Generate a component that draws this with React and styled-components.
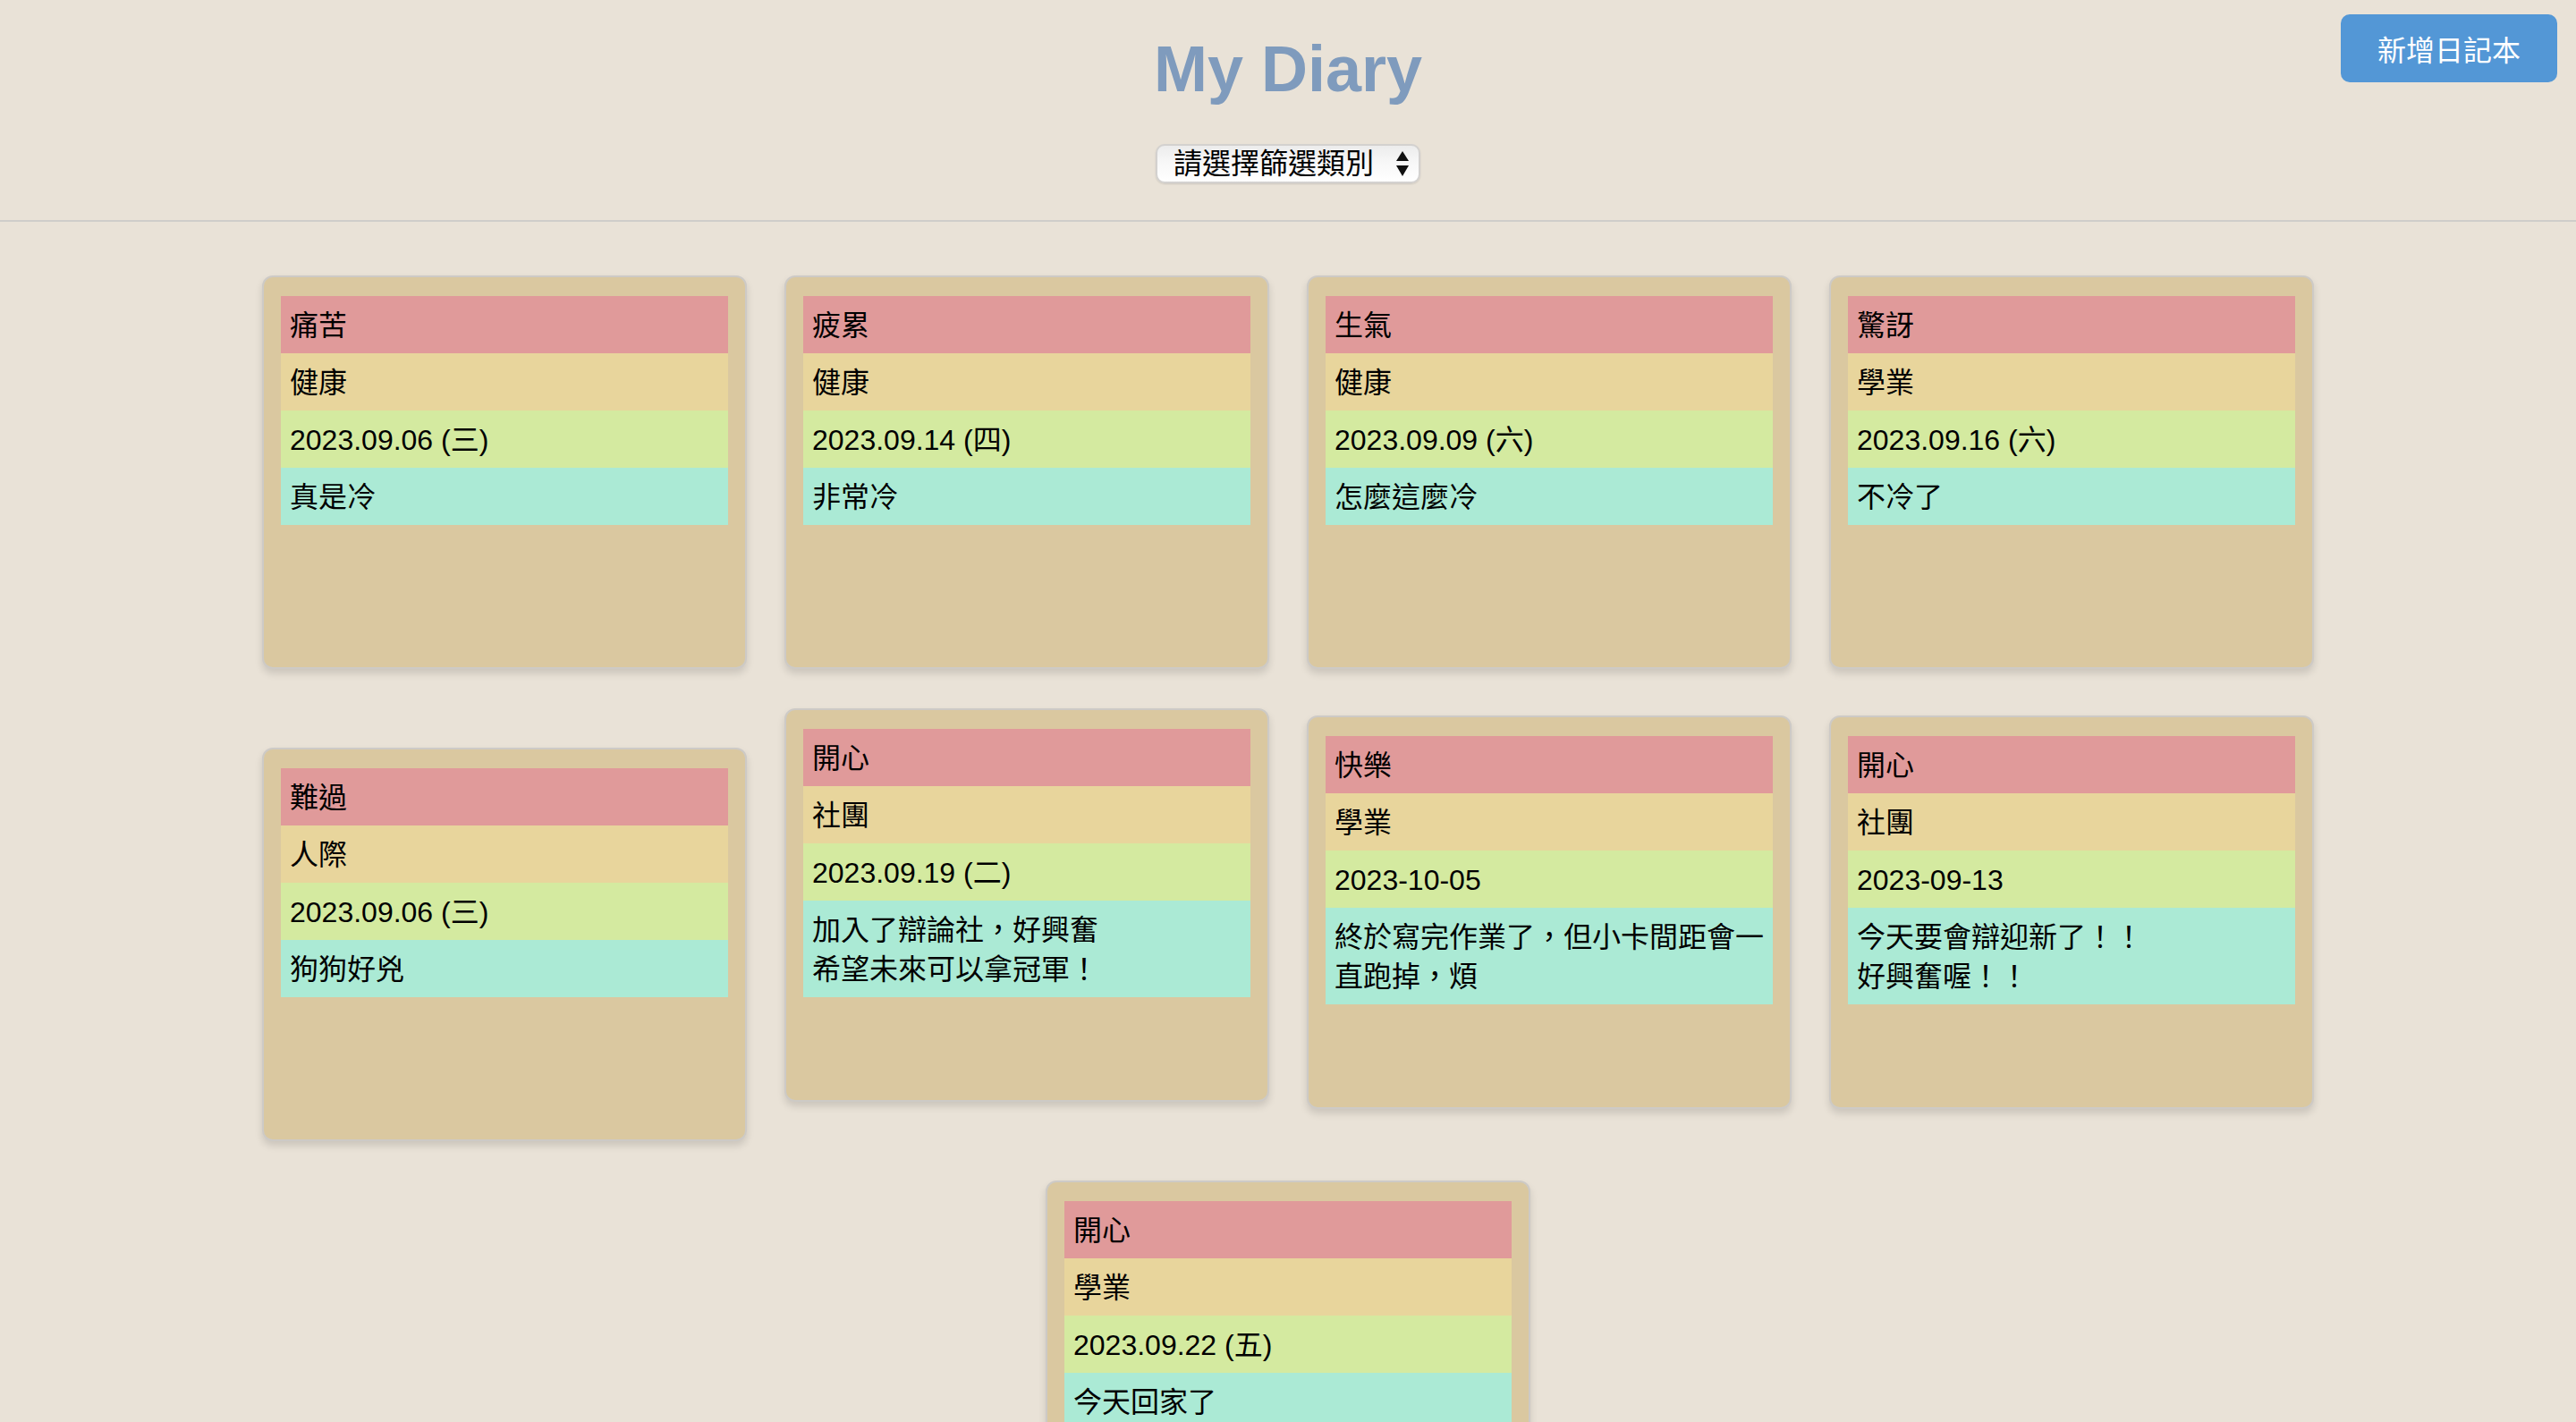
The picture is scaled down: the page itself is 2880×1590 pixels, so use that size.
import React from 'react';
import styled, { createGlobalStyle } from 'styled-components';

const entries = [
  { mood: '痛苦', tag: '健康', date: '2023.09.06 (三)', text: '真是冷' },
  { mood: '疲累', tag: '健康', date: '2023.09.14 (四)', text: '非常冷' },
  { mood: '生氣', tag: '健康', date: '2023.09.09 (六)', text: '怎麼這麼冷' },
  { mood: '驚訝', tag: '學業', date: '2023.09.16 (六)', text: '不冷了' },
  { mood: '難過', tag: '人際', date: '2023.09.06 (三)', text: '狗狗好兇', shift: 44 },
  { mood: '開心', tag: '社團', date: '2023.09.19 (二)', text: '加入了辯論社，好興奮\n希望未來可以拿冠軍！' },
  { mood: '快樂', tag: '學業', date: '2023-10-05', text: '終於寫完作業了，但小卡間距會一直跑掉，煩', shift: 8 },
  { mood: '開心', tag: '社團', date: '2023-09-13', text: '今天要會辯迎新了！！\n好興奮喔！！', shift: 8 },
  { mood: '開心', tag: '學業', date: '2023.09.22 (五)', text: '今天回家了' },
];

const App = () => {
  return (
    <>
      <GlobalStyle />
      <Header>
        <span />
        <TitleBlock>
          <Title>My Diary</Title>
          <SelectWrap>
            <FilterSelect defaultValue="">
              <option value="">請選擇篩選類別</option>
              <option value="健康">健康</option>
              <option value="學業">學業</option>
              <option value="人際">人際</option>
              <option value="社團">社團</option>
            </FilterSelect>
            <SelectArrow width="14" height="28" viewBox="0 0 14 28">
              <path d="M7 0 L14 11 L0 11 Z" fill="#111" />
              <path d="M0 16 L14 16 L7 28 Z" fill="#111" />
            </SelectArrow>
          </SelectWrap>
        </TitleBlock>
        <AddButton>新增日記本</AddButton>
      </Header>
      <CardList>
        {entries.map((e, i) => (
          <Card key={i} shift={e.shift || 0}>
            <Row tone="#e09a9a">{e.mood}</Row>
            <Row tone="#e8d59c">{e.tag}</Row>
            <Row tone="#d4eaa0">{e.date}</Row>
            <Row tone="#abead5">{e.text}</Row>
          </Card>
        ))}
      </CardList>
    </>
  );
};

export default App;

const GlobalStyle = createGlobalStyle`
  html {
    scrollbar-width: none;
  }
  html::-webkit-scrollbar {
    display: none;
  }
  body {
    margin: 0;
    background: #e9e2d7;
    font-family: "Liberation Sans", "Noto Sans CJK TC", sans-serif;
    color: #000;
  }
`;

const Header = styled.header`
  display: grid;
  grid-template-columns: 1fr auto 1fr;
  padding-bottom: 41px;
  border-bottom: 2px solid #cfcdca;
`;

const TitleBlock = styled.div`
  display: flex;
  flex-direction: column;
  align-items: center;
`;

const Title = styled.h1`
  margin: 35px 0 0;
  font-size: 72px;
  line-height: 84px;
  font-weight: 700;
  color: #7f9bbd;
  font-family: "Liberation Sans", sans-serif;
`;

const SelectWrap = styled.div`
  position: relative;
  margin-top: 42px;
  width: 296px;
  height: 44px;
`;

const FilterSelect = styled.select`
  appearance: none;
  -webkit-appearance: none;
  box-sizing: border-box;
  width: 100%;
  height: 100%;
  margin: 0;
  padding: 0 0 0 18px;
  border: 2px solid #d3d1cf;
  border-radius: 10px;
  background: linear-gradient(#ececec, #f7f7f7 45%, #ffffff);
  box-shadow: 0 1px 2px rgba(0, 0, 0, 0.12);
  font-family: "Liberation Sans", "Noto Sans CJK TC", sans-serif;
  font-size: 32px;
  color: #000;
  line-height: 40px;
`;

const SelectArrow = styled.svg`
  position: absolute;
  right: 13px;
  top: 8px;
  pointer-events: none;
`;

const AddButton = styled.button`
  justify-self: end;
  align-self: start;
  margin: 16px 21px 0 0;
  height: 76px;
  padding: 0 41px;
  border: none;
  border-radius: 10px;
  background: #5397d6;
  color: #fff;
  font-family: "Liberation Sans", "Noto Sans CJK TC", sans-serif;
  font-size: 32px;
  cursor: pointer;
`;

const CardList = styled.main`
  display: flex;
  flex-wrap: wrap;
  justify-content: center;
  align-items: flex-start;
  column-gap: 42px;
  row-gap: 44px;
  max-width: 2400px;
  margin: 0 auto;
  padding: 60px 0;
`;

const Card = styled.article`
  box-sizing: border-box;
  width: 542px;
  height: 440px;
  margin-top: ${({ shift }) => shift}px;
  padding: 21px 19px 19px;
  background: #dac8a0;
  border: 2px solid #cdcac6;
  border-radius: 12px;
  box-shadow: 0 5px 9px rgba(0, 0, 0, 0.13);
`;

const Row = styled.div`
  padding: 11px 10px 9px;
  background: ${({ tone }) => tone};
  font-size: 32px;
  line-height: 44px;
  white-space: pre-line;
`;
